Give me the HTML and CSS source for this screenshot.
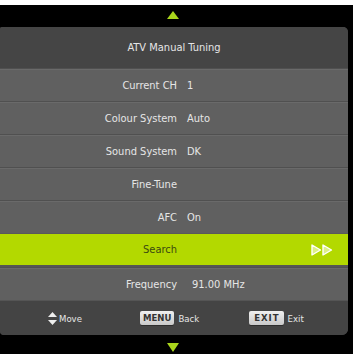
FILE: index.html
```html
<!DOCTYPE html>
<html>
<head>
<meta charset="utf-8">
<link rel="stylesheet" href="styles.css">
</head>
<body>
<div class="topstrip"></div>
<div class="nav nav-top">
  <svg width="12" height="8" viewBox="0 0 12 8"><polygon points="6,0 12,8 0,8" fill="#a9d51c"/></svg>
</div>
<div class="panel">
  <div class="header">ATV Manual Tuning</div>
  <div class="row"><span class="label">Current CH</span><span class="value">1</span></div>
  <div class="row"><span class="label">Colour System</span><span class="value">Auto</span></div>
  <div class="row"><span class="label">Sound System</span><span class="value">DK</span></div>
  <div class="row"><span class="label">Fine-Tune</span><span class="value"></span></div>
  <div class="row"><span class="label">AFC</span><span class="value">On</span></div>
  <div class="row active"><span class="label">Search</span><span class="value"></span>
    <svg class="ff" width="22" height="12" viewBox="0 0 22 12"><polygon points="1,1 9.5,6 1,11" fill="#dcef8a" stroke="#ffffff" stroke-width="1.4" stroke-linejoin="round"/><polygon points="12,1 20.5,6 12,11" fill="#dcef8a" stroke="#ffffff" stroke-width="1.4" stroke-linejoin="round"/></svg>
  </div>
  <div class="row"><span class="label">Frequency</span><span class="value freq">91.00 MHz</span></div>
  <div class="footer">
    <div class="hint hint-move">
      <svg width="9" height="13" viewBox="0 0 9 13"><polygon points="4.5,0 9,5 0,5" fill="#eeeeee"/><polygon points="0,8 9,8 4.5,13" fill="#eeeeee"/></svg>
      <span>Move</span>
    </div>
    <div class="hint hint-menu"><span class="key">MENU</span><span>Back</span></div>
    <div class="hint hint-exit"><span class="key key-exit">EXIT</span><span>Exit</span></div>
  </div>
</div>
<div class="nav nav-bottom">
  <svg width="12" height="9" viewBox="0 0 12 9"><polygon points="0,0 12,0 6,9" fill="#a9d51c"/></svg>
</div>
</body>
</html>
```
FILE: styles.css
```css
html, body {
  margin: 0;
  padding: 0;
  background: #000;
  width: 353px;
  height: 354px;
  overflow: hidden;
  font-family: "DejaVu Sans Condensed", "DejaVu Sans", sans-serif;
}
.topstrip {
  height: 5px;
  background: #fff;
}
.nav {
  display: flex;
  justify-content: center;
  width: 348px;
}
.nav-top {
  height: 22px;
  align-items: flex-start;
}
.nav-top svg { margin-top: 6px; margin-left: -2px; }
.nav-bottom {
  height: 21px;
  align-items: flex-start;
}
.nav-bottom svg { margin-top: 8px; margin-left: -2px; }
.panel {
  width: 348px;
  border-radius: 2px 5px 6px 4px;
  overflow: hidden;
  background: #444;
}
.header {
  height: 41px;
  display: flex;
  align-items: center;
  justify-content: center;
  color: #e6e6e6;
  font-size: 11px;
  background: #454545;
}
.row {
  height: 32px;
  display: grid;
  grid-template-columns: 177px 1fr auto;
  align-items: center;
  background: #606060;
  border-top: 1px solid #505050;
  box-shadow: inset 0 1px 0 #6a6a6a;
  color: #e6e6e6;
  font-size: 11px;
}
.label { text-align: right; }
.value { padding-left: 10px; }
.value.freq { padding-left: 15px; }
.row.active {
  background: #b3d900;
  color: #3b4a10;
  border-top: 1px solid #5a5a5a;
  box-shadow: none;
  height: 31px;
  border-bottom: 2px solid #555;
}
.ff { margin-right: 15px; }
.footer {
  height: 35px;
  background: #444;
  border-top: 1px solid #555;
  display: flex;
  align-items: center;
  font-size: 9.5px;
  color: #e6e6e6;
  box-sizing: border-box;
}
.hint {
  display: flex;
  align-items: center;
  gap: 4px;
}
.hint-move { margin-left: 48px; gap: 2px; }
.hint-menu { margin-left: 58px; }
.hint-exit { margin-left: 50px; }
.key {
  display: inline-block;
  background: linear-gradient(#f0f0f0, #c9c9c9);
  color: #333;
  font-weight: bold;
  font-size: 9.5px;
  line-height: 14px;
  height: 14px;
  padding: 0 3px;
  border-radius: 2px;
  box-shadow: 0 1px 0 #2e2e2e;
}
.key-exit {
  letter-spacing: 1px;
  padding: 0 4px 0 5px;
}
```
